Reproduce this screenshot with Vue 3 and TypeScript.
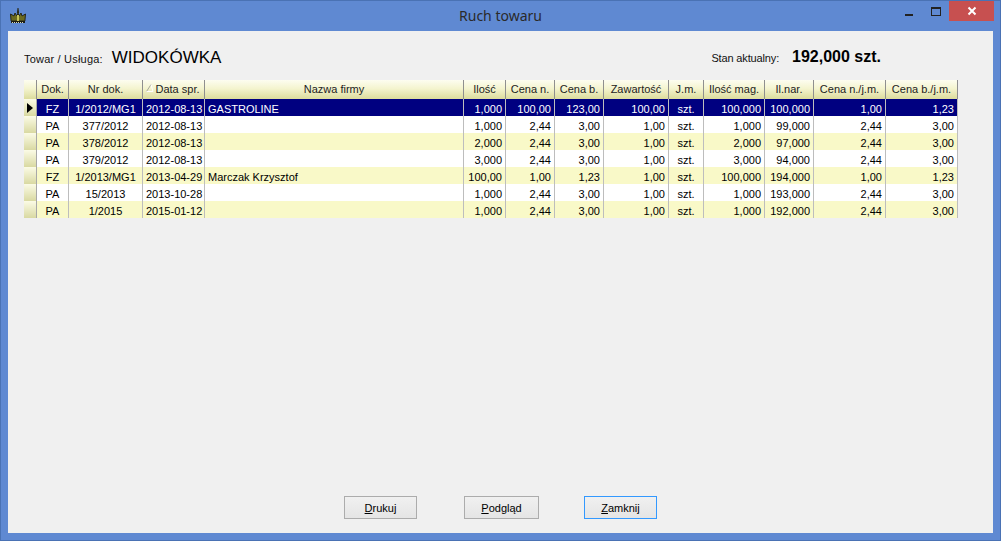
<script setup lang="ts">
interface Row { d: string; n: string; t: string; f: string; i: string; cn: string; cb: string; z: string; im: string; nar: string; cnj: string; cbj: string }
const cols = [
  { label: 'Dok.', w: 32 }, { label: 'Nr dok.', w: 74 }, { label: 'Data spr.', w: 62 }, { label: 'Nazwa firmy', w: 259 },
  { label: 'Ilość', w: 42 }, { label: 'Cena n.', w: 49 }, { label: 'Cena b.', w: 49 }, { label: 'Zawartość', w: 65 },
  { label: 'J.m.', w: 35 }, { label: 'Ilość mag.', w: 61 }, { label: 'Il.nar.', w: 49 }, { label: 'Cena n./j.m.', w: 72 }, { label: 'Cena b./j.m.', w: 72 },
]
const rows: Row[] = [
  { d: 'FZ', n: '1/2012/MG1', t: '2012-08-13', f: 'GASTROLINE', i: '1,000', cn: '100,00', cb: '123,00', z: '100,00', im: '100,000', nar: '100,000', cnj: '1,00', cbj: '1,23' },
  { d: 'PA', n: '377/2012', t: '2012-08-13', f: '', i: '1,000', cn: '2,44', cb: '3,00', z: '1,00', im: '1,000', nar: '99,000', cnj: '2,44', cbj: '3,00' },
  { d: 'PA', n: '378/2012', t: '2012-08-13', f: '', i: '2,000', cn: '2,44', cb: '3,00', z: '1,00', im: '2,000', nar: '97,000', cnj: '2,44', cbj: '3,00' },
  { d: 'PA', n: '379/2012', t: '2012-08-13', f: '', i: '3,000', cn: '2,44', cb: '3,00', z: '1,00', im: '3,000', nar: '94,000', cnj: '2,44', cbj: '3,00' },
  { d: 'FZ', n: '1/2013/MG1', t: '2013-04-29', f: 'Marczak Krzysztof', i: '100,00', cn: '1,00', cb: '1,23', z: '1,00', im: '100,000', nar: '194,000', cnj: '1,00', cbj: '1,23' },
  { d: 'PA', n: '15/2013', t: '2013-10-28', f: '', i: '1,000', cn: '2,44', cb: '3,00', z: '1,00', im: '1,000', nar: '193,000', cnj: '2,44', cbj: '3,00' },
  { d: 'PA', n: '1/2015', t: '2015-01-12', f: '', i: '1,000', cn: '2,44', cb: '3,00', z: '1,00', im: '1,000', nar: '192,000', cnj: '2,44', cbj: '3,00' },
]
const gridCols = '13px ' + cols.map((c) => c.w + 'px').join(' ')
</script>

<template>
  <div class="window">
    <header class="titlebar">
      <svg class="appicon" width="18" height="18" viewBox="0 0 18 18">
        <path d="M8.500 1h1l.6 5H7.900z" fill="#2a2a1a" />
        <path d="M1.500 7l3.500 2 1-3 2 3 1-3 1 3 2-3 1 3 3.500-2-.6 7H2.100z" fill="#6b6a20" stroke="#26261a" stroke-width="1" />
        <path d="M8 8h2v6H8z" fill="#c9c65a" />
        <path d="M2 14h14v2H2z" fill="#1c1c14" />
        <path d="M3 15h1v1H3zm2 0h1v1H5zm2 0h1v1H7zm2 0h1v1H9zm2 0h1v1h-1zm2 0h1v1h-1z" fill="#d8d8b0" />
      </svg>
      <div class="title">Ruch towaru</div>
      <div class="controls">
        <span class="min"></span>
        <span class="max"></span>
        <span class="close">
          <svg width="10" height="10" viewBox="0 0 10 10"><path d="M1.500 1.500l7 7M8.500 1.500l-7 7" stroke="#fff" stroke-width="2" /></svg>
        </span>
      </div>
    </header>

    <main class="client">
      <div class="info">
        <div class="info-left">
          <span class="lbl wide">Towar / Usługa:</span>
          <span class="name">WIDOKÓWKA</span>
        </div>
        <div class="info-right">
          <span class="lbl narrow">Stan aktualny:</span>
          <span class="stock">192,000 szt.</span>
        </div>
      </div>

      <div class="grid">
        <div class="row head" :style="{ gridTemplateColumns: gridCols }">
          <div class="ind"></div>
          <div v-for="(c, idx) in cols" :key="c.label" class="hc" :class="{ sorted: idx === 2 }">
            <svg v-if="idx === 2" class="sort" width="8" height="8" viewBox="0 0 8 8">
              <path d="M.5 7.500L5 .5" fill="none" stroke="#a8a89a" stroke-width="1" />
              <path d="M5 .5l2 7H.5" fill="none" stroke="#fff" stroke-width="1" />
            </svg>
            {{ c.label }}
          </div>
        </div>
        <div
          v-for="(r, i) in rows"
          :key="i"
          class="row body"
          :class="{ selected: i === 0, alt: i % 2 === 0 }"
          :style="{ gridTemplateColumns: gridCols }"
        >
          <div class="ind">
            <svg v-if="i === 0" width="6" height="10" viewBox="0 0 6 10"><path d="M0 0l6 5-6 5z" fill="#000" /></svg>
          </div>
          <div class="c ctr">{{ r.d }}</div>
          <div class="c ctr">{{ r.n }}</div>
          <div class="c ctr">{{ r.t }}</div>
          <div class="c lft">{{ r.f }}</div>
          <div class="c">{{ r.i }}</div>
          <div class="c">{{ r.cn }}</div>
          <div class="c">{{ r.cb }}</div>
          <div class="c">{{ r.z }}</div>
          <div class="c ctr">szt.</div>
          <div class="c">{{ r.im }}</div>
          <div class="c">{{ r.nar }}</div>
          <div class="c">{{ r.cnj }}</div>
          <div class="c">{{ r.cbj }}</div>
        </div>
      </div>

      <div class="buttons">
        <button class="btn b1"><u>D</u>rukuj</button>
        <button class="btn b2"><u>P</u>odgląd</button>
        <button class="btn b3 focus"><u>Z</u>amknij</button>
      </div>
    </main>
  </div>
</template>

<style>
html, body { margin: 0; padding: 0; }
</style>

<style scoped>
.window {
  width: 1001px;
  height: 541px;
  box-sizing: border-box;
  background: #5f89d2;
  border: 1px solid #4a72b4;
  padding: 0 7px 7px;
  display: flex;
  flex-direction: column;
  font-family: "Liberation Sans", Arial, sans-serif;
  font-size: 11px;
  color: #000;
}
.titlebar {
  height: 30px;
  flex: none;
  position: relative;
  display: flex;
  align-items: flex-start;
}
.appicon { position: absolute; left: 1px; top: 6px; }
.title {
  width: 100%;
  text-align: center;
  font-size: 14px;
  line-height: 16px;
  padding-top: 7px;
  color: #2a2a2a;
  font-family: "Noto Sans", "Liberation Sans", sans-serif;
}
.controls {
  position: absolute;
  right: -1px;
  top: 0;
  display: flex;
  align-items: flex-start;
}
.min { width: 8px; height: 2px; background: #222; margin-top: 13px; margin-right: 18px; }
.max { width: 8px; height: 6px; border: 1px solid #222; border-top-width: 2px; margin-top: 6px; margin-right: 8px; }
.close {
  width: 45px;
  height: 20px;
  background: #c75050;
  display: flex;
  align-items: center;
  justify-content: center;
}
.client {
  flex: 1;
  background: #f0f0f0;
  padding: 0 16px;
  display: flex;
  flex-direction: column;
  min-height: 0;
}
.info {
  height: 49px;
  flex: none;
  display: flex;
  justify-content: space-between;
  align-items: flex-start;
}
.info-left, .info-right { display: flex; align-items: baseline; padding-top: 17px; }
.lbl { font-size: 11px; color: #111; }
.wide { letter-spacing: 0.2px; }
.narrow { letter-spacing: -0.15px; }
.name { font-size: 17px; margin-left: 9px; }
.info-right { margin-right: 96px; }
.stock { font-size: 16px; font-weight: 700; margin-left: 13px; }
.grid { width: 934px; flex: none; }
.row { display: grid; }
.head { height: 19px; }
.head > div {
  background: linear-gradient(#fdfdf0 0%, #f4f4cf 45%, #dcdc9c 100%);
}
.hc {
  border-right: 1px solid #8f8f8f;
  text-align: center;
  line-height: 19px;
  color: #222;
  position: relative;
  white-space: nowrap;
  box-sizing: border-box;
}
.hc.sorted { padding-left: 8px; }
.sort { position: absolute; left: 3px; top: 4px; }
.head .ind { border-right: 1px solid #8f8f8f; }
.ind {
  background: linear-gradient(#fbfbe6, #d9d9a2);
  border-right: 1px solid #a8a8a8;
  box-sizing: border-box;
  display: flex;
  align-items: center;
  justify-content: flex-end;
  padding-right: 3px;
}
.body { height: 17px; background: #fff; }
.body.alt { background: #f9f9c8; }
.body.selected { background: #000080; color: #fff; }
.c {
  border-right: 1px solid #bdbdbd;
  box-sizing: border-box;
  line-height: 17px;
  text-align: right;
  padding: 2px 3px 0;
  white-space: nowrap;
  overflow: hidden;
}
.c.ctr { text-align: center; }
.c.lft { text-align: left; }
.buttons {
  margin-top: auto;
  height: 23px;
  margin-bottom: 14px;
  display: flex;
  padding-left: 320px;
}
.btn {
  height: 23px;
  box-sizing: border-box;
  border: 1px solid #acacac;
  background: linear-gradient(#f0f0f0, #e5e5e5);
  font: inherit;
  color: #000;
  padding: 0;
}
.b1 { width: 73px; }
.b2 { width: 75px; margin-left: 47px; }
.b3 { width: 73px; margin-left: 45px; }
.focus { border-color: #3399ff; }
</style>
